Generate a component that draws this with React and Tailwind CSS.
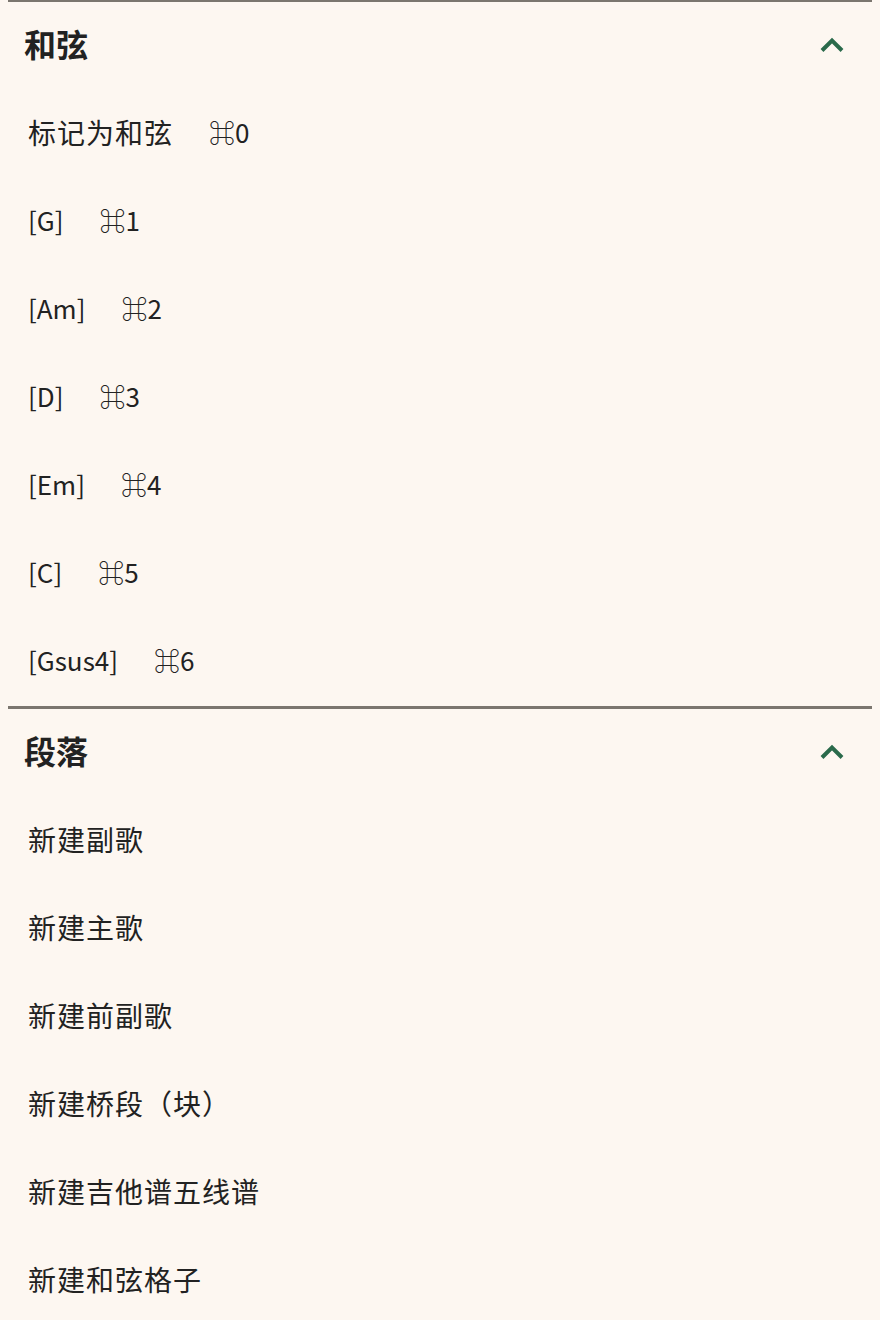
import { useState } from 'react';

const sections = [
  {
    title: '和弦',
    items: [
      ['标记为和弦', '⌘0'],
      ['[G]', '⌘1'],
      ['[Am]', '⌘2'],
      ['[D]', '⌘3'],
      ['[Em]', '⌘4'],
      ['[C]', '⌘5'],
      ['[Gsus4]', '⌘6'],
    ],
  },
  {
    title: '段落',
    items: [
      ['新建副歌'],
      ['新建主歌'],
      ['新建前副歌'],
      ['新建桥段（块）'],
      ['新建吉他谱五线谱'],
      ['新建和弦格子'],
    ],
  },
];

// latin labels/shortcuts run a touch smaller than the CJK ones
const isLatin = (s) => /^[\x00-\x7f⌘]+$/.test(s);

function Chevron() {
  return (
    <svg viewBox="0 0 24 16" className="h-4 w-6" aria-hidden="true">
      <path d="M2 13.5 12 3.5 22 13.5" fill="none" stroke="#2a6a4b" strokeWidth="4" strokeLinecap="butt" strokeLinejoin="miter" />
    </svg>
  );
}

function Section({ title, items }) {
  const [open, setOpen] = useState(true);
  return (
    <section className="border-t-[3px] border-[#7b766f]">
      <button
        type="button"
        onClick={() => setOpen(!open)}
        className="flex h-[88px] w-full items-center justify-between pl-4 pr-[28px] text-left"
      >
        <span className="mt-[-6px] text-[32px] font-bold leading-none text-[#222]">{title}</span>
        <span className={open ? 'mt-[-3px]' : 'mt-[-3px] rotate-180'}>
          <Chevron />
        </span>
      </button>
      {open && (
        <ul>
          {items.map(([label, key]) => (
            <li key={label} className="flex h-[88px] items-center pb-[4px] pl-5 leading-none text-[#222]">
              <span className={isLatin(label) ? 'text-[26px]' : 'text-[28px] tracking-[1px]'}>{label}</span>
              {key && <span className="ml-[36px] text-[26px]">{key}</span>}
            </li>
          ))}
        </ul>
      )}
    </section>
  );
}

export default function App() {
  return (
    <div
      className="min-h-screen bg-[#fdf7f1]"
      style={{ fontFamily: '"Noto Sans CJK SC", "Noto Sans", sans-serif' }}
    >
      <div className="mx-2 -mt-px">
        {sections.map((s) => (
          <Section key={s.title} {...s} />
        ))}
      </div>
    </div>
  );
}
